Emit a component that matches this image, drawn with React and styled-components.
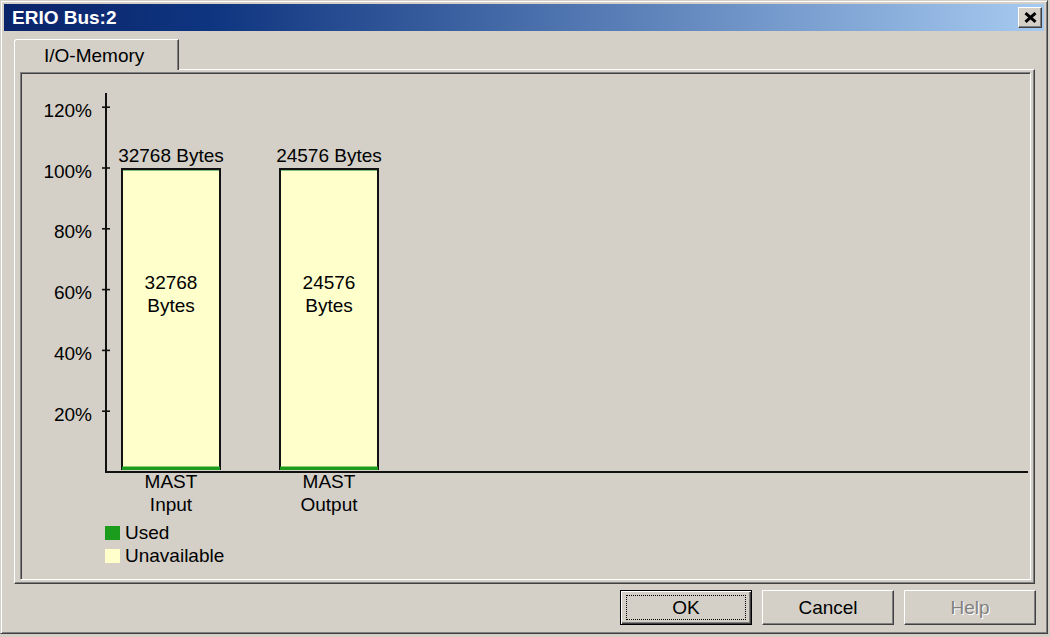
import React from "react";
import styled, { createGlobalStyle } from "styled-components";

const GlobalStyle = createGlobalStyle`
  html, body { margin: 0; padding: 0; background: #d4d0c8; }
  body { font-family: "Liberation Sans", Arial, sans-serif; font-size: 19px; color: #000; }
  #root { width: 1050px; height: 637px; overflow: hidden; }
`;

const Window = styled.div`
  box-sizing: border-box;
  width: 1048px;
  height: 634px;
  background: #d4d0c8;
  border: 1px solid;
  border-color: #d4d0c8 #404040 #404040 #d4d0c8;
  box-shadow: inset 1px 1px #ffffff, inset -1px -1px #808080;
  padding: 3px;
  display: flex;
  flex-direction: column;
`;

const TitleBar = styled.div`
  height: 27px;
  flex: none;
  display: flex;
  align-items: center;
  padding-left: 8px;
  background: linear-gradient(to right, #0a246a 0%, #0f3580 20%, #a6caf0 100%);
  color: #fff;
  font-weight: bold;
  font-size: 19px;
`;

const TitleText = styled.span`
  flex: 1;
  white-space: nowrap;
`;

const CloseButton = styled.button`
  box-sizing: border-box;
  width: 24px;
  height: 21px;
  margin-right: 2px;
  padding: 0;
  display: flex;
  align-items: center;
  justify-content: center;
  background: #d4d0c8;
  border: 1px solid;
  border-color: #ffffff #404040 #404040 #ffffff;
  box-shadow: inset -1px -1px #808080;
`;

const Body = styled.div`
  flex: 1;
  display: flex;
  flex-direction: column;
  padding: 8px 8px 0 10px;
`;

const TabRow = styled.div`
  display: flex;
  height: 31px;
  margin-bottom: -1px;
  position: relative;
  z-index: 1;
`;

const Tab = styled.div`
  box-sizing: border-box;
  width: 165px;
  height: 31px;
  display: flex;
  align-items: center;
  padding: 2px 0 0 29px;
  background: #d4d0c8;
  border-top: 1px solid #fff;
  border-left: 1px solid #fff;
  border-right: 1px solid #404040;
  border-top-left-radius: 3px;
  box-shadow: inset -1px 0 #808080;
  font-size: 19px;
`;

const Panel = styled.div`
  box-sizing: border-box;
  width: 1021px;
  height: 515px;
  display: flex;
  padding: 2px 3px 3px 5px;
  border: 1px solid;
  border-color: #ffffff #404040 #404040 #ffffff;
  box-shadow: inset -1px -1px #808080;
`;

const Frame = styled.div`
  flex: 1;
  display: flex;
  flex-direction: column;
  border: 1px solid;
  border-color: #808080 #ffffff #ffffff #808080;
  box-shadow: inset 1px 1px #404040, inset -1px -1px #d4d0c8;
  padding: 1px;
`;

const ChartSvg = styled.svg`
  display: block;
  flex: none;
  text {
    font-family: "Liberation Sans", Arial, sans-serif;
    font-size: 19px;
    fill: #000;
  }
`;

const Legend = styled.div`
  display: flex;
  flex-direction: column;
  margin-left: 83px;
`;

const LegendRow = styled.div`
  display: flex;
  align-items: center;
  height: 23px;
  line-height: 23px;
  gap: 5px;
`;

const Swatch = styled.span`
  width: 15px;
  height: 14px;
  background: ${(p) => p.$color};
`;

const ButtonRow = styled.div`
  display: flex;
  justify-content: flex-end;
  gap: 10px;
  margin-top: 6px;
`;

const Button = styled.button`
  box-sizing: border-box;
  width: 132px;
  height: 35px;
  padding: 0;
  display: flex;
  align-items: center;
  justify-content: center;
  background: #d4d0c8;
  font-family: "Liberation Sans", Arial, sans-serif;
  font-size: 19px;
  color: ${(p) => (p.disabled ? "#808080" : "#000")};
  text-shadow: ${(p) => (p.disabled ? "1px 1px #ffffff" : "none")};
  border: 1px solid;
  border-color: ${(p) =>
    p.$default ? "#000 #000 #000 #000" : "#ffffff #404040 #404040 #ffffff"};
  box-shadow: ${(p) =>
    p.$default
      ? "inset 1px 1px #ffffff, inset -1px -1px #404040, inset -2px -2px #808080"
      : "inset -1px -1px #808080"};
`;

const FocusRect = styled.span`
  box-sizing: border-box;
  width: 120px;
  height: 25px;
  display: flex;
  align-items: center;
  justify-content: center;
  border: 1px dotted #000;
`;

const OX = 22;
const OY = 74;
const yFor = (p) => 472 - p * 3.04;
const ticks = [20, 40, 60, 80, 100, 120];
const bars = [
  { x: 121, bytes: "32768", l1: "MAST", l2: "Input" },
  { x: 279, bytes: "24576", l1: "MAST", l2: "Output" },
];
const GREEN = "#1c9c1c";
const YELLOW = "#ffffcc";

function Chart() {
  return (
    <ChartSvg width="1006" height="447" viewBox="0 0 1006 447">
      <g transform={`translate(${-OX} ${-OY})`}>
        <line x1="106" y1="93" x2="106" y2="473" stroke="#111" strokeWidth="2" />
        <line x1="105" y1="472" x2="1028" y2="472" stroke="#111" strokeWidth="2" />
        {ticks.map((t) => (
          <g key={t}>
            <line x1="102" x2="110" y1={yFor(t)} y2={yFor(t)} stroke="#111" strokeWidth="1.6" />
            <text x="92" y={yFor(t) + 9.5} textAnchor="end">
              {t}%
            </text>
          </g>
        ))}
        {bars.map((b) => {
          const cx = b.x + 50;
          return (
            <g key={b.x}>
              <rect x={b.x + 1} y="169" width="98" height="300" fill={YELLOW} stroke="#111" strokeWidth="2" />
              <rect x={b.x + 2} y="170" width="96" height="1" fill="#7cc47c" />
              <rect x={b.x + 1} y="466.5" width="98" height="3.5" fill={GREEN} />
              <text x={cx} y="162" textAnchor="middle">
                {b.bytes} Bytes
              </text>
              <text x={cx} y="289" textAnchor="middle">
                {b.bytes}
              </text>
              <text x={cx} y="312" textAnchor="middle">
                Bytes
              </text>
              <text x={cx} y="488" textAnchor="middle">
                {b.l1}
              </text>
              <text x={cx} y="511" textAnchor="middle">
                {b.l2}
              </text>
            </g>
          );
        })}
      </g>
    </ChartSvg>
  );
}

export default function App() {
  return (
    <>
      <GlobalStyle />
      <Window>
        <TitleBar>
          <TitleText>ERIO Bus:2</TitleText>
          <CloseButton aria-label="Close">
            <svg width="13" height="11" viewBox="0 0 13 11">
              <path d="M1.5 1.2 L11.5 9.8 M11.5 1.2 L1.5 9.8" stroke="#000" strokeWidth="3" strokeLinecap="butt" />
            </svg>
          </CloseButton>
        </TitleBar>
        <Body>
          <TabRow>
            <Tab>I/O-Memory</Tab>
          </TabRow>
          <Panel>
            <Frame>
              <Chart />
              <Legend>
                <LegendRow>
                  <Swatch $color={GREEN} />
                  Used
                </LegendRow>
                <LegendRow>
                  <Swatch $color={YELLOW} />
                  Unavailable
                </LegendRow>
              </Legend>
            </Frame>
          </Panel>
          <ButtonRow>
            <Button $default>
              <FocusRect>OK</FocusRect>
            </Button>
            <Button>Cancel</Button>
            <Button disabled>Help</Button>
          </ButtonRow>
        </Body>
      </Window>
    </>
  );
}
